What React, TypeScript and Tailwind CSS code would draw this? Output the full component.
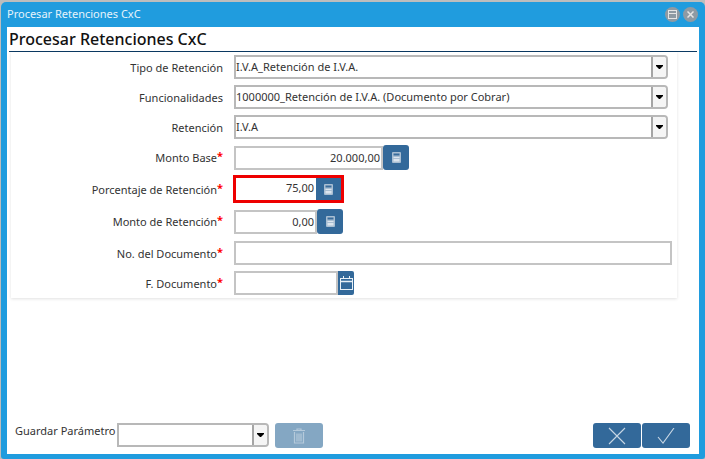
import type { ReactNode } from "react";

const font = { fontFamily: '"Noto Sans", sans-serif' };

function Caret() {
  return (
    <svg width="7" height="4" viewBox="0 0 7 4">
      <path d="M0 0h7v1L4 4H3L0 1z" fill="#000" />
    </svg>
  );
}

function CalcIcon() {
  return (
    <svg width="9" height="11" viewBox="0 0 9 11">
      <rect x="0" y="0" width="9" height="11" rx="1" fill="#a9bed2" />
      <rect x="1.5" y="1.5" width="6" height="2" fill="#3a6c9b" />
      <rect x="1.5" y="5" width="6" height="1" fill="#dce5ee" />
      <rect x="1.5" y="7" width="6" height="2.5" fill="#dce5ee" />
    </svg>
  );
}

function CalIcon() {
  return (
    <svg width="13" height="14" viewBox="0 0 13 14" fill="none" stroke="#e8f0f6">
      <rect x="0.5" y="2.5" width="12" height="11" />
      <path d="M0.5 5.5h12" strokeWidth="1.5" />
      <path d="M3.5 0v3M9.5 0v3" />
    </svg>
  );
}

function Row({ label, req, children, h }: { label: string; req?: boolean; children: ReactNode; h: string }) {
  return (
    <div className={`flex items-center ${h}`}>
      <div className="w-[215px] shrink-0 text-right text-[11px] text-[#333] pr-[3px] leading-none whitespace-nowrap">
        {label}
        {req ? <span className="text-[#f00] font-bold relative top-[-2px]">*</span> : null}
      </div>
      <div className="ml-[8px] flex items-center">{children}</div>
    </div>
  );
}

function Combo({ text, w = "w-[434px]" }: { text?: string; w?: string }) {
  return (
    <div className={`flex h-[24px] ${w} border-2 border-[#b8b8b8] rounded-r-[4px] bg-white`}>
      <div className="flex-1 text-[11px] leading-[20px] text-[#333] whitespace-nowrap overflow-hidden">{text}</div>
      <div className="w-[15px] border-l-2 border-[#a5a5a5] bg-[#f5f5f5] flex items-center justify-center rounded-r-[3px]">
        <Caret />
      </div>
    </div>
  );
}

function NumField({ value, w }: { value?: string; w: string }) {
  return (
    <div className={`h-[24px] ${w} border-2 border-[#c4c4c4] bg-white text-right pr-[1px] text-[11px] leading-[20px] text-[#333]`}>
      {value}
    </div>
  );
}

function CalcBtn() {
  return (
    <div className="flex h-[25px] w-[26px] items-center justify-center rounded-[3px] bg-[#33699a]">
      <CalcIcon />
    </div>
  );
}

export default function App() {
  return (
    <div className="h-[459px] w-[705px] overflow-hidden bg-[#bdbdbd] pt-[2px] pl-[1px]" style={font}>
      <div className="flex h-[457px] w-[704px] flex-col rounded-t-[5px] rounded-b-[3px] bg-[#209cde] pb-[5px]">
        <div className="flex h-[25px] shrink-0 items-center pl-[6px] pr-[7px]">
          <span className="text-[11px] text-[#e6f3fb]">Procesar Retenciones CxC</span>
          <div className="ml-auto flex gap-[3px]">
            <div className="flex h-[15px] w-[15px] items-center justify-center rounded-full bg-[#8e9aa3]">
              <svg width="9" height="9" viewBox="0 0 9 9" fill="none" stroke="#e5e5e5">
                <rect x="0.5" y="0.5" width="8" height="8" />
                <path d="M0.5 3.5h8" />
              </svg>
            </div>
            <div className="flex h-[15px] w-[15px] items-center justify-center rounded-full bg-[#8e9aa3]">
              <svg width="7" height="7" viewBox="0 0 7 7" stroke="#e5e5e5" strokeWidth="1.5">
                <path d="M0.5 0.5l6 6M6.5 0.5l-6 6" />
              </svg>
            </div>
          </div>
        </div>
        <div className="mx-[6px] flex min-h-0 flex-1 flex-col bg-white">
          <div className="ml-[2px] mr-[2px] h-[25px] shrink-0 border-b border-[#0b3a63] text-[16px] font-medium leading-[25px] text-[#111]">
            Procesar Retenciones CxC
          </div>
          <div className="ml-[4px] h-[246px] w-[666px] shadow-[0_1px_3px_rgba(0,0,0,0.12)]">
            <Row label="Tipo de Retención" h="h-[30px]">
              <Combo text="I.V.A_Retención de I.V.A." />
            </Row>
            <Row label="Funcionalidades" h="h-[30px]">
              <Combo text="1000000_Retención de I.V.A. (Documento por Cobrar)" />
            </Row>
            <Row label="Retención" h="h-[30px]">
              <Combo text="I.V.A" />
            </Row>
            <Row label="Monto Base" req h="h-[31px]">
              <NumField value="20.000,00" w="w-[149px]" />
              <CalcBtn />
            </Row>
            <Row label="Porcentaje de Retención" req h="h-[32px]">
              <div className="-ml-[1px] flex h-[28px] items-center border-[3px] border-[#ee0000]">
                <div className="h-[22px] w-[80px] bg-white pr-[2px] text-right text-[11px] leading-[20px] text-[#333]">75,00</div>
                <div className="flex h-[22px] w-[25px] items-center justify-center bg-[#33699a]">
                  <CalcIcon />
                </div>
              </div>
            </Row>
            <Row label="Monto de Retención" req h="h-[33px]">
              <NumField value="0,00" w="w-[83px]" />
              <CalcBtn />
            </Row>
            <Row label="No. del Documento" req h="h-[30px]">
              <NumField w="w-[438px]" />
            </Row>
            <Row label="F. Documento" req h="h-[30px]">
              <NumField w="w-[104px]" />
              <div className="flex h-[24px] w-[16px] items-center justify-center rounded-r-[2px] bg-[#33699a]">
                <CalIcon />
              </div>
            </Row>
          </div>
          <div className="mt-auto flex h-[31px] items-start pl-[8px] pr-[9px]">
            <span className="-mt-px w-[100px] whitespace-nowrap text-[11px] leading-[18px] text-[#333]">Guardar Parámetro</span>
            <div className="ml-[2px]">
              <Combo w="w-[152px]" />
            </div>
            <div className="ml-[6px] flex h-[25px] w-[48px] items-center justify-center rounded-[3px] bg-[#84a7c3]">
              <svg width="12" height="16" viewBox="0 0 12 16" fill="none" stroke="#b5cadb" strokeWidth="1.2">
                <path d="M0 2.5h12M4 2.5V1h4v1.5M1.5 4v11h9V4M4 5.5v8M6 5.5v8M8 5.5v8" />
              </svg>
            </div>
            <div className="ml-auto flex gap-px">
              <div className="flex h-[25px] w-[48px] items-center justify-center rounded-[3px] bg-[#33699a]">
                <svg width="18" height="18" viewBox="0 0 18 18" stroke="#c8d7e4" strokeWidth="1.1">
                  <path d="M1 1l16 16M17 1L1 17" />
                </svg>
              </div>
              <div className="flex h-[25px] w-[48px] items-center justify-center rounded-[3px] bg-[#33699a]">
                <svg width="18" height="16" viewBox="0 0 18 16" fill="none" stroke="#c8d7e4" strokeWidth="1.1">
                  <path d="M1 9l5 6L17 0" />
                </svg>
              </div>
            </div>
          </div>
        </div>
      </div>
    </div>
  );
}
